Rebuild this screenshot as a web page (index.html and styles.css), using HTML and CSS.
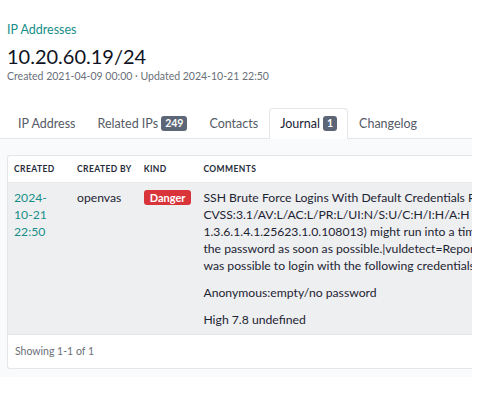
FILE: index.html
```html
<!DOCTYPE html>
<html>
<head>
<meta charset="utf-8">
<link rel="stylesheet" href="styles.css">
</head>
<body>
<div class="page">
  <header class="head">
    <a class="crumb" href="#">IP Addresses</a>
    <h1 class="title">10.20.60.19/24</h1>
    <div class="meta">Created 2021-04-09 00:00 · Updated 2024-10-21 22:50</div>
  </header>
  <nav class="tabs">
    <div class="tab">IP Address</div>
    <div class="tab">Related IPs <span class="badge">249</span></div>
    <div class="tab">Contacts</div>
    <div class="tab active">Journal <span class="badge">1</span></div>
    <div class="tab">Changelog</div>
  </nav>
  <section class="panel">
    <div class="card">
      <table class="grid">
        <thead>
          <tr>
            <th class="c-created">Created</th>
            <th class="c-by">Created by</th>
            <th class="c-kind">Kind</th>
            <th class="c-comments">Comments</th>
          </tr>
        </thead>
        <tbody>
          <tr>
            <td class="c-created"><a class="date" href="#">2024-<br>10-21<br>22:50</a></td>
            <td class="c-by">openvas</td>
            <td class="c-kind"><span class="danger">Danger</span></td>
            <td class="c-comments">
              <p>SSH Brute Force Logins With Default Credentials Reporting (OID:<br>CVSS:3.1/AV:L/AC:L/PR:L/UI:N/S:U/C:H/I:H/A:H cvss (OID:<br>1.3.6.1.4.1.25623.1.0.108013) might run into a timeout. Change<br>the password as soon as possible.|vuldetect=Reports if it<br>was possible to login with the following credentials:</p>
              <p>Anonymous:empty/no password</p>
              <p>High 7.8 undefined</p>
            </td>
          </tr>
        </tbody>
      </table>
      <div class="foot">Showing 1-1 of 1</div>
    </div>
  </section>
</div>
</body>
</html>
```
FILE: styles.css
```css
html, body {
  margin: 0;
  padding: 0;
  background: #fff;
}
body {
  font-family: Lato, "Noto Sans", sans-serif;
  color: #1d2433;
}
.page {
  width: 472px;
  overflow: hidden;
}
.head {
  padding: 22px 7px 0 7px;
}
.crumb {
  display: block;
  color: #178f88;
  text-decoration: none;
  font-size: 12.5px;
  line-height: 16px;
}
.title {
  margin: 6px 0 0 0;
  font-size: 20px;
  font-weight: 400;
  line-height: 24px;
  color: #0f1424;
}
.meta {
  margin-top: 1px;
  font-size: 10.5px;
  line-height: 14px;
  color: #6a6f78;
}
.tabs {
  display: flex;
  margin-top: 25px;
  padding-left: 7px;
  border-bottom: 1px solid #e3e6ea;
  height: 30px;
}
.tab {
  display: flex;
  align-items: center;
  gap: 3px;
  padding: 0 10px 2px 10px;
  font-size: 12.5px;
  color: #555b66;
  border: 1px solid transparent;
  border-bottom: none;
  border-radius: 4px 4px 0 0;
  margin-bottom: -1px;
  white-space: nowrap;
}
.tab.active {
  background: #fff;
  border-color: #e3e6ea;
  color: #1b2236;
  height: 31px;
  box-sizing: border-box;
}
.badge {
  display: inline-block;
  background: #5c6677;
  color: #fff;
  font-size: 10.5px;
  font-weight: 700;
  line-height: 15px;
  padding: 0 4px;
  border-radius: 3px;
}
.panel {
  background: #f9fafc;
  padding: 16px 0 8px 7px;
}
.card {
  background: #fff;
  border: 1px solid #e4e6ea;
  border-right: none;
  border-radius: 3px 0 0 3px;
  width: 620px;
}
.grid {
  border-collapse: collapse;
  width: 100%;
}
.grid th {
  text-align: left;
  font-size: 8.5px;
  font-weight: 700;
  text-transform: uppercase;
  letter-spacing: 0.4px;
  color: #262c3a;
  padding: 0 6px 1px 6px;
  height: 25px;
  border-bottom: 1px solid #e9ebef;
  white-space: nowrap;
}
.grid td {
  background: #eeeff1;
  vertical-align: top;
  font-size: 12.2px;
  line-height: 17px;
  padding: 6px 6px 6px 6px;
  color: #1d2433;
}
.c-created { width: 51px; }
.c-by { width: 53px; }
.c-kind { width: 47px; }
.date {
  color: #178f88;
  text-decoration: none;
}
.danger {
  display: inline-block;
  background: #d8343a;
  color: #fff;
  font-size: 11px;
  font-weight: 700;
  line-height: 15px;
  padding: 0 6px;
  border-radius: 3px;
  margin-top: 1px;
}
.c-comments p {
  margin: 0 0 10px 0;
  white-space: nowrap;
}
.c-comments p:last-child {
  margin-bottom: 0;
}
.foot {
  border-top: 1px solid #e4e6ea;
  font-size: 10.5px;
  line-height: 13px;
  color: #6a6f78;
  padding: 10px 7px 10px 7px;
}
```
